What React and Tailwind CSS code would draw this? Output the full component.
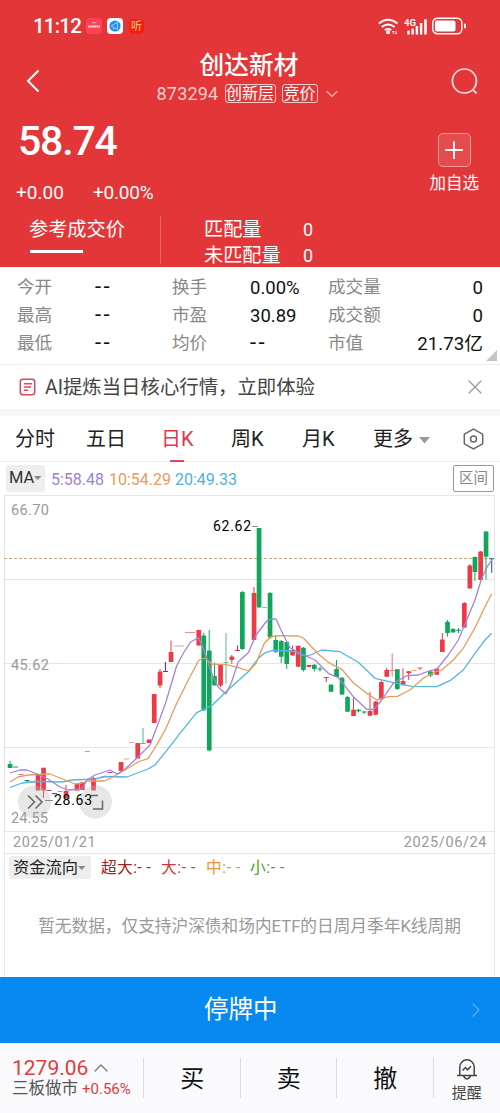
import React from 'react';
import { ChevronDown, ChevronRight, ChevronUp, Plus, X } from 'lucide-react';

const RED = '#ee3a47';
const GREEN = '#12a65c';

// x, body top, body bottom, wick top, wick bottom, direction
const candles = [
  [10, 764, 768, 761, 768, 'g'],
  [38, 775, 790.5, 775, 790.5, 'r'],
  [43.5, 767.7, 790.5, 767.7, 798, 'r'],
  [66, 791, 798, 785, 798, 'r'],
  [77, 784, 790.5, 784, 790.5, 'r'],
  [82.3, 782, 790, 782, 790, 'r'],
  [93.5, 778, 790.5, 777, 790.5, 'r'],
  [121, 762, 771, 762, 771, 'r'],
  [137.7, 743, 758.5, 743, 758.5, 'r'],
  [149, 739.5, 743, 739.5, 743, 'r'],
  [154.2, 694, 723, 694, 723, 'r'],
  [160, 671.5, 685.5, 669, 688, 'r'],
  [171, 652, 662, 640.5, 662, 'r'],
  [198.7, 630, 645.5, 630, 645.5, 'r'],
  [203.7, 635.5, 710.5, 633, 710.5, 'g'],
  [209.2, 650.5, 750.5, 630, 751.5, 'g'],
  [214.5, 676, 685.5, 662.5, 685.5, 'g'],
  [220.5, 664, 685.5, 664, 687, 'r'],
  [231.8, 656.5, 660, 655, 664, 'r'],
  [242.3, 592, 649, 591, 650, 'g'],
  [254, 593, 640, 587, 640, 'r'],
  [259, 528, 607.5, 528, 607.5, 'g'],
  [270, 593, 637.5, 592, 639, 'g'],
  [275.7, 640, 651.7, 635.5, 653, 'g'],
  [281.2, 641, 656.7, 640, 663, 'g'],
  [286.7, 642, 664, 641, 669, 'g'],
  [292.5, 650, 655.5, 645.5, 655.5, 'r'],
  [298.2, 646, 666.7, 645, 666.7, 'r'],
  [303.4, 647.7, 670, 647, 671.5, 'g'],
  [309, 665, 667, 665, 667, 'r'],
  [314.3, 664.7, 669, 664, 671.5, 'g'],
  [331, 684.5, 691.7, 684.5, 691.7, 'g'],
  [336.5, 669, 677, 660, 677, 'g'],
  [342, 677.7, 694.5, 677, 695, 'g'],
  [347.5, 697, 711.7, 696, 711.7, 'g'],
  [353.5, 709.7, 716, 697, 716, 'r'],
  [358.5, 709.7, 711.3, 709, 712.5, 'g'],
  [370, 711, 715.7, 692, 715.7, 'r'],
  [375.7, 701.5, 714.7, 701, 715, 'r'],
  [381.3, 682, 699.3, 680.5, 699.3, 'r'],
  [386.7, 670, 676.7, 668, 676.7, 'r'],
  [397.3, 669.3, 689, 669, 690, 'g'],
  [403, 681, 685.3, 668.3, 685.3, 'r'],
  [408.7, 671.3, 673.3, 671, 680, 'r'],
  [430.5, 671.5, 675.5, 671, 677, 'g'],
  [436.7, 668.5, 674.7, 668.5, 674.7, 'r'],
  [442.3, 639.5, 652, 633, 652, 'r'],
  [447.5, 621.7, 633, 620, 636.5, 'g'],
  [453, 629, 632.5, 628, 632.5, 'g'],
  [464.3, 603, 627.5, 602, 628, 'r'],
  [469.8, 565.5, 588.5, 564, 588.5, 'r'],
  [474.9, 557, 572, 556.5, 581, 'g'],
  [480.6, 551.5, 580, 551, 580, 'r'],
  [486, 531.5, 556.7, 531, 579.5, 'g'],
];

// thin sessions: x, y of the dash, wick top, wick bottom, colour
const dashes = [
  [15.5, 767, 766.5, 767.5, '#12a65c'],
  [21, 774.5, 774.5, 774.5, '#c98aa0'],
  [27, 780.5, 780.5, 783, '#12805a'],
  [32.5, 782, 782, 782, '#e08a70'],
  [49, 790.5, 790, 791, '#c04060'],
  [54.5, 793.5, 793.5, 794.5, '#12805a'],
  [60, 791.5, 791.5, 791.5, '#d98aa0'],
  [87.5, 751.5, 751.5, 751.5, '#c99aa0'],
  [104, 776.5, 776.5, 776.5, '#ec8f8f'],
  [110, 772.5, 772.5, 772.5, '#d0407a'],
  [126.5, 759, 759, 759, '#f0a878'],
  [131.5, 742.5, 742.5, 742.5, '#e3a0a8'],
  [143, 743.5, 728, 743.5, '#5cc08d'],
  [165.5, 671.5, 662, 671.5, '#b0204f'],
  [176.5, 646, 646, 646, '#d4b3bf'],
  [181.5, 646, 646, 646, '#d4b3bf'],
  [187.5, 632.5, 632.5, 632.5, '#ef8f96'],
  [192.5, 632.5, 632.5, 632.5, '#ef8f96'],
  [226, 662.5, 633, 683.5, '#6cbf96'],
  [237.5, 650.5, 645.5, 650.5, '#c0304a'],
  [264.5, 607.5, 607.5, 607.5, '#d59ab5'],
  [320, 669, 667, 671.5, '#12a65c'],
  [326.3, 677.5, 677.5, 682, '#ee3a47'],
  [364.2, 712, 711, 714, '#12a65c'],
  [392.2, 670.5, 653.5, 676.7, '#f08088'],
  [414, 670.5, 670.5, 670.5, '#f0a070'],
  [420, 668, 668, 670, '#e06060'],
  [458.5, 630.3, 628, 633, '#12a65c'],
  [491.7, 558.7, 558.7, 572.7, '#12707a'],
];

const ma5 =
  '10,773 20,770 27,770 37,774 48,779 60,787 68,790 82,789 87,780 95,775 104,772 110,770 117,774 124,770 137,758 150,745 158,724 166,701.7 176.7,665.7 184,652 191,641.7 198.3,637.7 204,650 211.7,673.3 218,687 226,694 231.7,681.7 238.3,661.7 248.3,652.7 256,635 266.7,621 271,619 276,619 283.3,635 290,647.7 303.3,655 315,660 328.3,673.3 338.3,677.7 353.3,696.7 366.7,709.3 374,709.3 381.7,700 393.3,683.3 406.7,675.7 418.3,675 430,670.7 436.7,669.3 448.3,655 458.3,640 466.7,620 475,600 481.7,578.3 486.7,567.7 491.7,560';
const ma10 =
  '10,782 18,777 28,775 50,774 60,778 75,784 82,783 88,781 104,781 113,777 130,767 138,762 148.3,758.3 156.7,745 166,728.3 176.7,703.3 188.3,680 199,660 205,658 211.7,664 226.7,664.7 238.3,667.7 249,671 256,663.3 264.3,643.3 270.7,637 276.7,635.7 298.3,636 303.3,638 318.3,654 328.3,662.3 341.7,669.3 353.3,682.7 366.7,693.3 376.7,700 388.3,696.7 397.3,696.3 410,690 423.3,678.3 433.3,672.7 441.7,670 453.3,660 463.3,648.3 475,627.7 485,606.7 491.7,593.7';
const ma20 =
  '10,787.5 22,783 35,781.5 62,782 72,780 95,779 105,776.5 127,777 140,772 148,769 155,765 166.7,750.7 180,733.3 196.7,712.7 211.7,705.7 226.7,691 248.3,671.7 258.3,658.3 265,652.7 273.3,650.3 291.7,651 301.7,655 308.3,656 321.7,650 340,651.7 358.3,662.3 375,678.3 396.7,683.3 411.7,686.3 436.7,686.7 450,680.7 463.3,670 475,653.3 485,640 491.7,633.3';

function StatusBar() {
  return (
    <div className="flex h-[52px] items-center pl-[33px] pr-[34px]">
      <span className="w-[50px] whitespace-nowrap text-[20.5px] font-medium leading-none tracking-[-0.8px]">11:12</span>
      <span className="ml-[3px] flex h-4 w-4 items-center justify-center rounded bg-[#ff4055]">
        <svg width="16" height="16" viewBox="0 0 16 16" fill="none" stroke="#fff">
          <path d="M5.500 4q2.500 2 5 0" strokeWidth="0.8" opacity="0.7" />
          <path d="M2 8.5h12" strokeWidth="1.8" strokeDasharray="1.6 .5" opacity="0.85" />
        </svg>
      </span>
      <span className="ml-[5px] flex h-4 w-4 items-center justify-center rounded bg-white">
        <svg width="12" height="12" viewBox="0 0 12 12">
          <circle cx="6" cy="6" r="5.6" fill="#1f93e6" />
          <path d="M9.5 1.8L2.2 5.8l2.2 1.2v2l1.4-1.2 2.6 1.6V3.2" fill="none" stroke="#bfe2fb" strokeWidth="0.8" />
        </svg>
      </span>
      <span className="ml-[6px] flex h-[15px] w-[15px] items-center justify-center rounded bg-[#fb1c0d] text-[11px] leading-none text-[#ffd28a]">听</span>
      <div className="ml-auto flex items-center">
        <svg width="21" height="17" viewBox="0 0 21 17" fill="none" stroke="#fff" strokeWidth="2.1">
          <path d="M.9 5.5Q10 -2 19.4 5.5" />
          <path d="M3.8 9Q10 4 16.6 9" />
          <path d="M6.8 12.2q3.2-2.4 6.4 0" />
          <circle cx="10.1" cy="14.3" r="1" fill="#fff" />
          <path d="M15.3 13v3M18 13v3M14.5 14l.8-1 .8 1M17.2 15l.8 1 .8-1" strokeWidth="0.9" />
        </svg>
        <svg className="ml-[5px]" width="24" height="17" viewBox="0 0 24 17" fill="#fff">
          <text x="0" y="8" fontSize="9.5" fontWeight="700" textLength="12" lengthAdjust="spacingAndGlyphs">4G</text>
          <rect x="3.3" y="12.5" width="2.4" height="4" rx=".5" />
          <rect x="7.5" y="10.5" width="2.4" height="6" rx=".5" />
          <rect x="11.7" y="8" width="2.4" height="8.5" rx=".5" />
          <rect x="15.9" y="5" width="2.4" height="11.5" rx=".5" />
          <rect x="20.2" y="1.2" width="2.6" height="15.3" rx=".5" />
        </svg>
        <svg className="-mr-[1px] ml-1" width="35" height="18" viewBox="0 0 35 18">
          <rect x=".8" y="1.3" width="29" height="15.4" rx="4.5" fill="none" stroke="#fff" strokeWidth="1.5" />
          <rect x="3" y="3.5" width="20.5" height="11" rx="2" fill="#fff" />
          <rect x="32" y="6.5" width="1.8" height="5" rx=".9" fill="#fff" />
        </svg>
      </div>
    </div>
  );
}

function Header() {
  return (
    <header className="h-[267px] overflow-hidden bg-[#e33638] text-white">
      <StatusBar />
      <div className="flex h-[54px] items-start justify-between pl-[26px] pr-[21px]">
        <svg className="mr-[7px] mt-[17px]" width="14" height="24" viewBox="0 0 14 24" fill="none" stroke="#fff" strokeWidth="2">
          <path d="M12.5 1.500L2 12l10.500 10.500" />
        </svg>
        <div className="flex flex-col items-center">
          <h1 className="h-[31px] text-[24.7px] font-medium leading-[28px]">创达新材</h1>
          <div className="flex h-[21px] items-center text-[16px] leading-none">
            <span className="w-[68px] whitespace-nowrap text-[18px] tracking-[0.2px] text-[#fbcfcd]">873294</span>
            <span className="flex h-[19px] w-[51px] items-center justify-center rounded-[3px] border border-[#f9c9c8]">创新层</span>
            <span className="ml-[6px] flex h-[19px] w-[36px] items-center justify-center rounded-[3px] border border-[#f9c9c8]">竞价</span>
            <ChevronDown className="ml-[4px] h-5 w-5 text-[#f4b4b3]" strokeWidth={1.4} />
          </div>
        </div>
        <svg className="mt-[14px]" width="28" height="30" viewBox="0 0 28 30" fill="none" stroke="#fde0df" strokeWidth="1.7">
          <circle cx="13.4" cy="15" r="12" />
          <path d="M21.8 23.6l3.8 3.8" />
        </svg>
      </div>
      <div className="flex h-[110px] justify-between pl-[18px] pr-[21px]">
        <div>
          <div className="mt-[15px] text-[41px] font-medium leading-[40px] tracking-[-1.2px]">58.74</div>
          <div className="mt-[21px] flex text-[19px] leading-[22px]">
            <span className="-ml-[2px] w-[77px]">+0.00</span>
            <span className="tracking-[-0.2px]">+0.00%</span>
          </div>
        </div>
        <div className="flex flex-col items-center pt-[27px]">
          <span className="flex h-[34px] w-[33px] items-center justify-center rounded-[5px] border border-[#f09a9b] bg-[#e54b4d]">
            <Plus className="h-7 w-7 shrink-0" strokeWidth={1.6} />
          </span>
          <span className="mt-[7px] text-[16.5px] leading-5">加自选</span>
        </div>
      </div>
      <div className="flex text-[19.2px] leading-[26px]">
        <div className="h-[48px] w-[161px] border-r border-[#eb6a6b] pl-[29px]">
          <div className="pt-[1px]">参考成交价</div>
          <div className="mt-[7px] ml-[1px] h-[3px] w-[53px] bg-white" />
        </div>
        <div className="pl-[43px] pt-[1px]">
          <div className="flex"><span className="w-[99px]">匹配量</span><span className="text-[18px]">0</span></div>
          <div className="flex"><span className="w-[99px]">未匹配量</span><span className="text-[18px]">0</span></div>
        </div>
      </div>
    </header>
  );
}

const stats = [
  ['今开', '--', '换手', '0.00%', '成交量', '0'],
  ['最高', '--', '市盈', '30.89', '成交额', '0'],
  ['最低', '--', '均价', '--', '市值', '21.73亿'],
];

function Value({ text }) {
  if (text === '--') {
    return <span className="-mt-[2px] text-[22px] tracking-[2.5px]">{text}</span>;
  }
  return <span className="text-[18.5px]">{text}</span>;
}

function Stats() {
  return (
    <section className="relative h-[98px] border-b border-[#eeeeee] px-[17px] pt-[7px]">
      {stats.map((row) => (
        <div key={row[0]} className="grid h-[28px] grid-cols-[78px_77px_78px_78px_1fr] items-center whitespace-nowrap text-[17.6px] leading-none text-[#111]">
          <span className="text-[#888]">{row[0]}</span>
          <Value text={row[1]} />
          <span className="text-[#888]">{row[2]}</span>
          <Value text={row[3]} />
          <span className="col-span-1 flex items-center justify-between">
            <span className="text-[#888]">{row[4]}</span>
            <span className="text-[18.7px]">{row[5]}</span>
          </span>
        </div>
      ))}
      <svg className="absolute bottom-[3px] right-[3px]" width="11" height="11"><path d="M11 0v11H0z" fill="#c4c4c4" /></svg>
    </section>
  );
}

function AiBar() {
  return (
    <section className="flex h-[51px] items-center border-b-[7px] border-[#f7f7f7] pl-[19px] pr-[13px]">
      <svg width="18" height="18" viewBox="0 0 18 18" fill="none" stroke="#e0475a" strokeWidth="1.5">
        <rect x="1.3" y="1.3" width="14.4" height="15.4" rx="2.5" />
        <path d="M5 5.7h8M5 9h7M5 12.3h4" />
      </svg>
      <span className="ml-[8px] mt-[1px] text-[19.4px] leading-none text-[#444]">AI提炼当日核心行情，立即体验</span>
      <X className="ml-auto h-6 w-6 text-[#999]" strokeWidth={1.2} />
    </section>
  );
}

function Tabs() {
  return (
    <nav className="flex h-[46px] items-center border-b border-[#eeeeee] pl-[15px] pt-[1px] text-[20px] leading-none text-[#222]">
      <span className="w-[71px]">分时</span>
      <span className="w-[75px]">五日</span>
      <span className="relative w-[70px] text-[#e03846]">
        日K
        <i className="absolute -bottom-[13px] left-[9px] h-[2px] w-[14px] bg-[#e0475a]" />
      </span>
      <span className="w-[71px]">周K</span>
      <span className="w-[71px]">月K</span>
      <span>更多</span>
      <svg className="ml-[6px] mt-[2px]" width="11" height="7"><path d="M0 0h11L5.5 6.5z" fill="#999" /></svg>
      <svg className="ml-[33px]" width="21" height="22" viewBox="0 0 21 22" fill="none" stroke="#666" strokeWidth="1.5">
        <path d="M10.5 1.2l8.6 4.6q.6.4.6 1v8.4q0 .6-.6 1l-8.6 4.6-8.6-4.6q-.6-.4-.6-1V6.8q0-.6.6-1z" />
        <circle cx="10.5" cy="11" r="3" />
      </svg>
    </nav>
  );
}

function MaRow() {
  return (
    <div className="flex h-[33px] items-center whitespace-nowrap px-[6px] text-[16px] leading-none">
      <span className="flex h-[27px] w-[39px] items-center rounded-[2px] bg-[#eeeeee] pl-[3px] text-[16.5px] text-[#333]">
        MA
        <svg width="8" height="5"><path d="M0 0h7.5L3.7 4z" fill="#888" /></svg>
      </span>
      <span className="ml-[6px] mt-[2px] w-[58px] text-[#a07fd3]">5:58.48</span>
      <span className="mt-[2px] w-[66px] text-[#ea9a5c]">10:54.29</span>
      <span className="mt-[2px] text-[#4fb0de]">20:49.33</span>
      <span className="ml-auto flex h-[27px] w-[41px] items-center justify-center rounded-[2px] border border-[#999] pt-[1px] text-[14.5px] text-[#888]">区间</span>
    </div>
  );
}

function KChart() {
  return (
    <svg className="block" width="500" height="337" viewBox="0 495 500 337" fontSize="14.5">
      <path d="M4.5 495.5h490M4.5 579.5h490M4.5 663.5h490M4.5 747.5h490M4.5 831.5h490M4.5 495v337M494.5 495v337" fill="none" stroke="#e6e6e6" />
      <path d="M4 558.5h490" stroke="#c2a983" strokeDasharray="3 2" />
      {dashes.map(([x, y, top, bottom, c]) => (
        <path key={x} d={`M${x - 2.5} ${y}h5M${x} ${top}V${bottom}`} stroke={c} strokeWidth="1.1" />
      ))}
      {candles.map(([x, top, bottom, wickTop, wickBottom, dir]) => (
        <g key={x} fill={dir === 'r' ? RED : GREEN}>
          <rect x={x - 0.5} y={wickTop} width="1" height={wickBottom - wickTop} />
          <rect x={x - 2.3} y={top} width="4.7" height={bottom - top} rx=".4" />
        </g>
      ))}
      <g fill="none" strokeWidth="1.3" strokeLinejoin="round">
        <polyline points={ma20} stroke="#53b6e2" />
        <polyline points={ma10} stroke="#eb9b5c" />
        <polyline points={ma5} stroke="#a583d8" />
      </g>
      <circle cx="34.5" cy="802" r="16.5" fill="#bbb" opacity=".35" />
      <circle cx="95.5" cy="802" r="16.5" fill="#bbb" opacity=".35" />
      <g fill="none" stroke="#666" strokeWidth="1.5">
        <path d="M28 795.5l6.5 6.5-6.500 6.500M35.500 795.500l6.500 6.500-6.500 6.500" />
        <path d="M91 795.5h7M102.5 800.5v8.500h-9.500" />
      </g>
      <path d="M45 800.500h8M252 526.500h6" stroke="#888" />
      <g fill="#999">
        <text x="11" y="515" textLength="38">66.70</text>
        <text x="11" y="670" textLength="38">45.62</text>
        <text x="11" y="823" textLength="37">24.55</text>
      </g>
      <g fill="#000" fontSize="14">
        <text x="54" y="805" textLength="38">28.63</text>
        <text x="213" y="531" textLength="38">62.62</text>
      </g>
    </svg>
  );
}

function FundFlow() {
  return (
    <section className="mx-[4px] h-[145px] w-[491px] border-x border-[#e8e8e8]">
      <div className="flex h-[22px] items-center justify-between border-b border-[#e8e8e8] pl-[8px] pr-[7px] pt-[1px] text-[14.5px] leading-none tracking-[0.6px] text-[#999]">
        <span>2025/01/21</span>
        <span>2025/06/24</span>
      </div>
      <div className="flex h-[27px] items-center whitespace-nowrap pl-[4px] text-[15.7px] leading-none">
        <span className="flex h-[23px] w-[82px] items-center rounded-[3px] bg-[#eeeeee] pl-[4px] pt-[1px] text-[16.3px] text-[#222]">
          资金流向
          <svg width="8" height="5"><path d="M0 0h7.5L3.7 4z" fill="#888" /></svg>
        </span>
        <span className="ml-[10px] mt-[1px] w-[60px] tracking-[0.4px] text-[#a3201c]">超大:- -</span>
        <span className="mt-[1px] w-[45px] tracking-[0.6px] text-[#cc3a3a]">大:- -</span>
        <span className="mt-[1px] w-[44px] tracking-[0.6px] text-[#e89438]">中:- -</span>
        <span className="mt-[1px] tracking-[0.6px] text-[#4d9a2e]">小:- -</span>
      </div>
      <p className="whitespace-nowrap pt-[36px] text-center text-[16.68px] leading-5 text-[#999]">暂无数据，仅支持沪深债和场内ETF的日周月季年K线周期</p>
    </section>
  );
}

function BottomBar() {
  return (
    <footer className="flex h-[70px] bg-[#fafafc] leading-none">
      <div className="w-[143px] whitespace-nowrap pl-[12px] pt-[15px]">
        <div className="flex h-[20px] items-center text-[21px] text-[#e23a3e]">
          <span className="w-[77px]">1279.06</span>
          <ChevronUp className="h-6 w-6 shrink-0 text-[#777]" strokeWidth={1.3} />
        </div>
        <div className="flex h-[22px] items-center text-[16.5px] text-[#555]">
          三板做市
          <span className="ml-[4px] mt-[1px] text-[15px] text-[#e23a3e]">+0.56%</span>
        </div>
      </div>
      {['买', '卖', '撤'].map((label) => (
        <div key={label} className="flex w-[96.5px] items-center">
          <i className="h-[40px] w-px bg-[#dddddd]" />
          <span className="flex-1 pt-[1px] pl-[1px] text-center text-[24px] text-[#111]">{label}</span>
        </div>
      ))}
      <div className="flex flex-1 items-center">
        <i className="h-[40px] w-px bg-[#dddddd]" />
        <div className="flex flex-1 flex-col items-center pt-[2px]">
          <svg width="22" height="23" viewBox="0 0 22 23" fill="none" stroke="#444" strokeWidth="1.5">
            <path d="M3.8 17V9a7.200 7.200 0 0 1 14.400 0V17M1 17.500h20M7.500 18q3.500 6 7 0" />
            <path d="M6.5 12.500l3-3 2 2.300 3.500-3.600" />
          </svg>
          <span className="mt-[5px] text-[15px] text-[#444]">提醒</span>
        </div>
      </div>
    </footer>
  );
}

export default function App() {
  return (
    <div className="flex h-[1113px] w-[500px] flex-col overflow-hidden bg-white font-[Roboto,'Noto_Sans_CJK_SC',sans-serif]">
      <Header />
      <Stats />
      <AiBar />
      <Tabs />
      <MaRow />
      <KChart />
      <FundFlow />
      <button className="flex h-[66px] items-center bg-[#0889ef] pl-[204px] pr-[12px] text-[24.5px] leading-none text-white">
        停牌中
        <ChevronRight className="ml-auto h-6 w-6 text-[#4fb0fa]" strokeWidth={1.3} />
      </button>
      <BottomBar />
    </div>
  );
}
